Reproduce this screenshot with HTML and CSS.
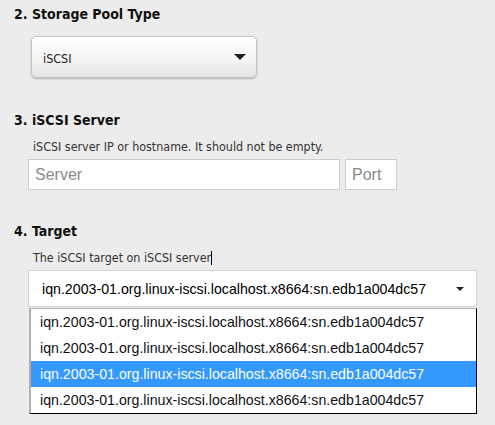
FILE: index.html
```html
<!DOCTYPE html>
<html>
<head>
<meta charset="utf-8">
<link rel="stylesheet" href="styles.css">
</head>
<body>
<div class="page">
  <section class="step step-type">
    <h2 class="step-title">2. Storage Pool Type</h2>
    <div class="step-body">
      <div class="pool-select">
        <span class="pool-value">iSCSI</span>
        <span class="pool-arrow"></span>
      </div>
    </div>
  </section>

  <section class="step step-server">
    <h2 class="step-title">3. iSCSI Server</h2>
    <div class="step-body">
      <p class="hint">iSCSI server IP or hostname. It should not be empty.</p>
      <div class="server-row">
        <input class="field field-server" type="text" placeholder="Server">
        <input class="field field-port" type="text" placeholder="Port">
      </div>
    </div>
  </section>

  <section class="step step-target">
    <h2 class="step-title">4. Target</h2>
    <div class="step-body">
      <p class="hint">The iSCSI target on iSCSI server<span class="caret"></span></p>
      <div class="target-wrap">
        <div class="target-select">
          <span class="target-value">iqn.2003-01.org.linux-iscsi.localhost.x8664:sn.edb1a004dc57</span>
          <span class="target-arrow"></span>
        </div>
        <ul class="target-list">
          <li class="target-item">iqn.2003-01.org.linux-iscsi.localhost.x8664:sn.edb1a004dc57</li>
          <li class="target-item">iqn.2003-01.org.linux-iscsi.localhost.x8664:sn.edb1a004dc57</li>
          <li class="target-item is-selected">iqn.2003-01.org.linux-iscsi.localhost.x8664:sn.edb1a004dc57</li>
          <li class="target-item">iqn.2003-01.org.linux-iscsi.localhost.x8664:sn.edb1a004dc57</li>
        </ul>
      </div>
    </div>
  </section>
</div>
</body>
</html>
```

FILE: styles.css
```css
html, body {
  margin: 0;
  padding: 0;
  background: #ececec;
}
body {
  width: 495px;
  height: 425px;
  overflow: hidden;
  font-family: "DejaVu Sans Condensed", "DejaVu Sans", Verdana, sans-serif;
  color: #000;
}
.page {
  display: flex;
  flex-direction: column;
  padding: 6px 0 0 14px;
}
.step-title {
  margin: 0;
  font-family: "DejaVu Sans Condensed", "DejaVu Sans", Verdana, sans-serif;
  font-weight: bold;
  font-size: 14px;
  line-height: 17px;
  color: #111;
}
.step-type .step-body {
  padding: 13px 0 0 17px;
}
.pool-select {
  width: 226px;
  height: 42px;
  box-sizing: border-box;
  border: 1px solid #c4c4c4;
  border-radius: 5px;
  background: linear-gradient(#ffffff, #f3f3f3 60%, #e4e4e4);
  box-shadow: 0 1px 2px rgba(0,0,0,0.25);
  display: flex;
  align-items: center;
  justify-content: space-between;
  padding: 0 10px 0 11px;
}
.pool-value {
  font-family: "DejaVu Sans Condensed", "DejaVu Sans", sans-serif;
  font-size: 12.5px;
  color: #1a1a1a;
  padding-top: 2px;
}
.pool-arrow {
  width: 0;
  height: 0;
  border-left: 6px solid transparent;
  border-right: 6px solid transparent;
  border-top: 6px solid #222;
}
.step-server {
  margin-top: 34px;
}
.step-body {
  padding-left: 14px;
}
.hint {
  margin: 10px 0 0 5px;
  font-family: "DejaVu Sans Condensed", "DejaVu Sans", sans-serif;
  font-size: 12.4px;
  line-height: 15px;
  color: #333;
}
.server-row {
  display: flex;
  gap: 5px;
  margin-top: 5px;
}
.field {
  height: 31px;
  box-sizing: border-box;
  border: 1px solid #cccccc;
  background: #fff;
  margin: 0;
  padding: 0 6px;
  font-family: "Liberation Sans", Arial, sans-serif;
  font-size: 16px;
  outline: none;
}
.field::placeholder {
  color: #8a8a8a;
}
.field-server {
  width: 312px;
}
.field-port {
  width: 52px;
}
.step-target {
  margin-top: 33px;
}
.caret {
  display: inline-block;
  width: 1px;
  height: 14px;
  background: #000;
  vertical-align: -3px;
}
.target-wrap {
  margin-top: 5px;
  display: flex;
  flex-direction: column;
  width: 449px;
}
.target-select {
  height: 37px;
  box-sizing: border-box;
  border: 1px solid #d4d4d4;
  background: #fff;
  display: flex;
  align-items: center;
  justify-content: space-between;
  padding: 0 12px 0 13px;
  font-family: "Liberation Sans", Arial, sans-serif;
  font-size: 14.2px;
}
.target-arrow {
  width: 0;
  height: 0;
  border-left: 4px solid transparent;
  border-right: 4px solid transparent;
  border-top: 4px solid #222;
}
.target-list {
  list-style: none;
  margin: 1px 0 0 1px;
  padding: 0;
  background: #fff;
  border-left: 2px solid #b0b0b0;
  border-top: 1px solid #b8b8b8;
  border-right: 1px solid #000;
  border-bottom: 1px solid #000;
  box-sizing: border-box;
}
.target-item {
  height: 26px;
  line-height: 26px;
  padding-left: 9px;
  font-family: "Liberation Sans", Arial, sans-serif;
  font-size: 14.2px;
  color: #111;
}
.target-item.is-selected {
  background: #3399ff;
  color: #fff;
}
```
